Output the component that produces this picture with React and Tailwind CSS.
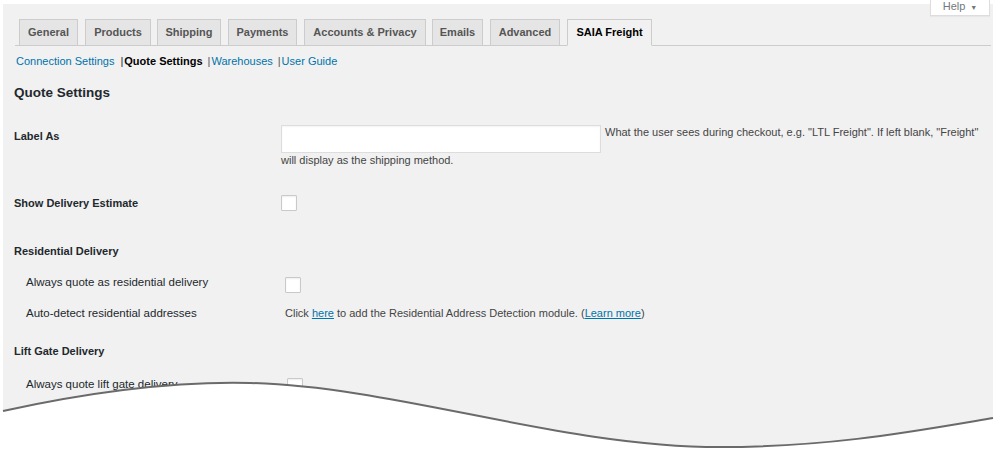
import React from 'react';

const tabs = [
  { label: 'General', w: 'w-[59px]', ml: '' },
  { label: 'Products', w: 'w-[66px]', ml: 'ml-[7px]' },
  { label: 'Shipping', w: 'w-[64px]', ml: 'ml-[6px]' },
  { label: 'Payments', w: 'w-[69px]', ml: 'ml-[7px]' },
  { label: 'Accounts & Privacy', w: 'w-[122px]', ml: 'ml-[7px]' },
  { label: 'Emails', w: 'w-[51px]', ml: 'ml-[6px]' },
  { label: 'Advanced', w: 'w-[70px]', ml: 'ml-[7px]' },
  { label: 'SAIA Freight', w: 'w-[85px]', ml: 'ml-[7px]', active: true },
];

const Checkbox = ({ className = '' }) => (
  <span
    className={`block w-[16px] h-[16px] bg-white border border-[#c9c9c9] rounded-[1px] shadow-[inset_0_1px_2px_rgba(0,0,0,0.07)] ${className}`}
  />
);

const Wave = () => (
  <svg
    className="absolute left-0 top-0 pointer-events-none"
    width="999"
    height="456"
    viewBox="0 0 999 456"
  >
    <path
      d="M0,411.5 L3,411 C90,392 170,381 250,383 C400,387 560,447 720,447 C830,447 910,432 993,418 L999,418 L999,456 L0,456 Z"
      fill="#ffffff"
    />
    <path
      d="M3,411 C90,392 170,381 250,383 C400,387 560,447 720,447 C830,447 910,432 993,418"
      fill="none"
      stroke="#6a6a6a"
      strokeWidth="2"
    />
  </svg>
);

export default function App() {
  return (
    <div
      className="relative w-[999px] h-[456px] overflow-hidden bg-white text-[#23282d]"
      style={{ fontFamily: '"Liberation Sans", Arial, sans-serif' }}
    >
      <div className="ml-[3px] mr-[6px] mt-[4px] h-[452px] bg-[#f1f1f1] overflow-hidden">
        {/* tabs */}
        <div className="mt-[15px] ml-[12px] mr-[2px] pl-[4px] flex items-end border-b border-[#cccccc]">
          {tabs.map((t) => (
            <div
              key={t.label}
              className={`${t.w} ${t.ml} h-[27px] -mb-px flex items-center justify-center whitespace-nowrap text-[11px] font-bold border border-[#cccccc] ${
                t.active
                  ? 'bg-[#f1f1f1] text-[#000000] border-b-[#f1f1f1]'
                  : 'bg-[#e5e5e5] text-[#555555]'
              }`}
            >
              {t.label}
            </div>
          ))}
        </div>

        {/* sub nav */}
        <div className="mt-[8px] ml-[13px] text-[11px] leading-[14px] flex items-center">
          <span className="text-[#0073aa]">Connection Settings</span>
          <span className="ml-[6px]">|</span>
          <span className="font-bold text-black ml-[1px]">Quote Settings</span>
          <span className="ml-[5px] text-[#555]">|</span>
          <span className="text-[#0073aa] ml-[1px]">Warehouses</span>
          <span className="ml-[5px] text-[#555]">|</span>
          <span className="text-[#0073aa] ml-[1px]">User Guide</span>
        </div>

        <h2 className="mt-[16px] ml-[11px] text-[13.5px] leading-[18px] font-bold">
          Quote Settings
        </h2>

        {/* Label As */}
        <div className="mt-[23px] ml-[11px] flex">
          <div className="w-[267px] shrink-0 pt-[4px] text-[11px] leading-[15px] font-bold">
            Label As
          </div>
          <div className="text-[11px] leading-[15px] text-[#444]">
            <span className="inline-block align-top w-[320px] h-[28px] bg-white border border-[#dddddd] shadow-[inset_0_1px_2px_rgba(0,0,0,0.05)]" />
            <span className="ml-[4px] whitespace-nowrap">
              What the user sees during checkout, e.g. "LTL Freight". If left blank, "Freight"
            </span>
            <br />
            will display as the shipping method.
          </div>
        </div>

        {/* Show Delivery Estimate */}
        <div className="mt-[27px] ml-[11px] flex items-center">
          <div className="w-[267px] shrink-0 text-[11px] leading-[15px] font-bold">
            Show Delivery Estimate
          </div>
          <Checkbox />
        </div>

        {/* Residential */}
        <div className="mt-[33px] ml-[11px] text-[11px] leading-[15px] font-bold">
          Residential Delivery
        </div>
        <div className="mt-[12px] ml-[23px] flex items-center">
          <div className="w-[259px] shrink-0 text-[11.5px] leading-[15px]">
            Always quote as residential delivery
          </div>
          <Checkbox className="mt-[6px]" />
        </div>
        <div className="mt-[13px] ml-[23px] flex items-center">
          <div className="w-[259px] shrink-0 text-[11.5px] leading-[15px]">
            Auto-detect residential addresses
          </div>
          <div className="text-[11px] leading-[15px] text-[#444] whitespace-nowrap">
            Click <span className="text-[#0073aa] underline">here</span> to add the Residential
            Address Detection module. (<span className="text-[#0073aa] underline">Learn more</span>)
          </div>
        </div>

        {/* Lift Gate */}
        <div className="mt-[23px] ml-[11px] text-[11px] leading-[15px] font-bold">
          Lift Gate Delivery
        </div>
        <div className="mt-[15px] ml-[23px] flex items-center">
          <div className="w-[261px] shrink-0 text-[11.5px] leading-[15px]">
            Always quote lift gate delivery
          </div>
          <Checkbox className="mt-[4px]" />
        </div>
      </div>

      {/* help tab */}
      <div className="absolute left-[930px] top-0 w-[60px] h-[16px] bg-white border border-t-0 border-[#dddddd] shadow-[0_1px_1px_rgba(0,0,0,0.04)] flex items-end justify-center pb-[3px] text-[11px] leading-[11px] text-[#72777c]">
        <span>Help</span>
        <span className="ml-[5px] text-[7px] leading-[9px]">▼</span>
      </div>

      <Wave />
    </div>
  );
}
